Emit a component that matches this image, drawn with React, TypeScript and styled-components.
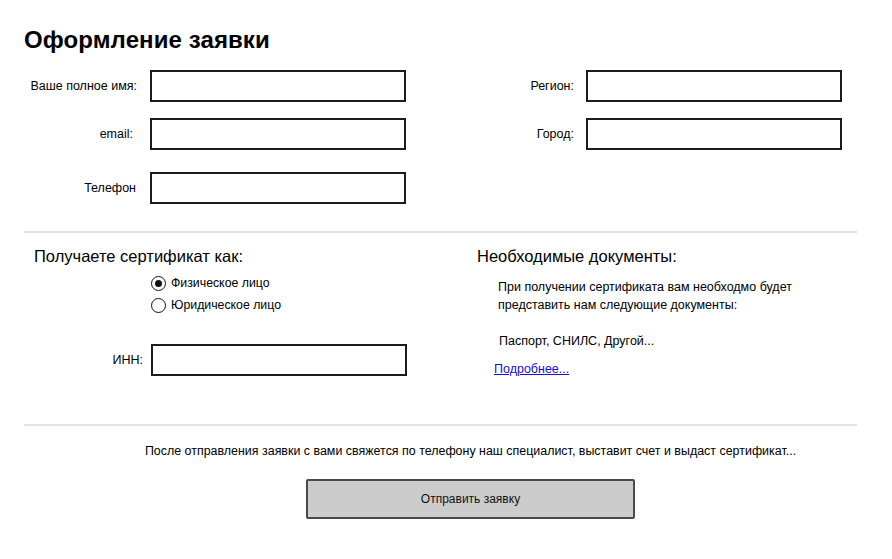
import React from 'react';
import styled, { createGlobalStyle } from 'styled-components';

const GlobalStyle = createGlobalStyle`
  html, body { margin: 0; padding: 0; background: #ffffff; }
  body {
    font-family: "Liberation Sans", Arial, sans-serif;
    color: #000;
    font-size: 12px;
  }
`;

const Page = styled.div`
  width: 892px;
  height: 559px;
  box-sizing: border-box;
  padding: 28px 35px 0 24px;
  overflow: hidden;
`;

const Title = styled.h1`
  margin: 0;
  font-size: 24px;
  line-height: 23px;
  font-weight: bold;
  letter-spacing: 0.1px;
`;

const TopGrid = styled.div`
  display: grid;
  grid-template-columns: 382px 381px;
  column-gap: 55px;
  margin-top: 19px;
  align-items: start;
`;

const Column = styled.div<{ $pad?: number }>`
  display: flex;
  flex-direction: column;
  padding-left: ${p => p.$pad ?? 0}px;
`;

const FieldRow = styled.div<{ $top?: number }>`
  display: flex;
  align-items: center;
  height: 32px;
  margin-top: ${p => p.$top ?? 0}px;
`;

const Label = styled.label<{ $width: number; $gap: number }>`
  width: ${p => p.$width}px;
  margin-right: ${p => p.$gap}px;
  text-align: right;
  font-size: 12.5px;
  white-space: nowrap;
  flex-shrink: 0;
`;

const TextBox = styled.input`
  width: 256px;
  height: 32px;
  box-sizing: border-box;
  border: 2px solid #1c1c1c;
  border-radius: 0;
  background: #fff;
  padding: 0 6px;
  font: inherit;
  outline: none;
`;

const Divider = styled.hr<{ $top: number }>`
  margin: ${p => p.$top}px 0 0 0;
  height: 2px;
  border: none;
  background: #e2e2e2;
`;

const MiddleGrid = styled.div`
  display: grid;
  grid-template-columns: 422px 1fr;
  align-items: start;
  margin-top: 13px;
`;

const SectionHeading = styled.h2<{ $indent: number }>`
  margin: 0 0 0 ${p => p.$indent}px;
  font-size: 16.5px;
  line-height: 20px;
  font-weight: normal;
`;

const RadioGroup = styled.div`
  display: flex;
  flex-direction: column;
  margin: 6px 0 0 127px;
`;

const RadioRow = styled.label`
  display: flex;
  align-items: center;
  height: 22px;
  font-size: 12.3px;
  gap: 5px;
`;

const RadioCircle = styled.span<{ $checked?: boolean }>`
  width: 15px;
  height: 15px;
  box-sizing: border-box;
  border: 1.5px solid #111;
  border-radius: 50%;
  display: inline-flex;
  align-items: center;
  justify-content: center;
  background: #fff;
  &::after {
    content: '';
    width: 7px;
    height: 7px;
    border-radius: 50%;
    background: #111;
    display: ${p => (p.$checked ? 'block' : 'none')};
  }
`;

const Paragraph = styled.p<{ $top: number; $indent: number }>`
  margin: ${p => p.$top}px 0 0 ${p => p.$indent}px;
  font-size: 12.5px;
  line-height: 18px;
`;

const MoreLink = styled.a`
  display: block;
  margin: 11px 0 0 48px;
  font-size: 12.5px;
  line-height: 16px;
  color: #1a0dcc;
  text-decoration: underline;
`;

const Footer = styled.div`
  display: flex;
  flex-direction: column;
  align-items: center;
  padding-left: 60px;
`;

const Note = styled.p`
  margin: 17px 0 0 0;
  font-size: 12.45px;
  line-height: 16px;
  white-space: nowrap;
`;

const SubmitButton = styled.button`
  margin-top: 20px;
  width: 329px;
  height: 40px;
  box-sizing: border-box;
  background: #cccccc;
  border: 2px solid #4a4a4a;
  border-radius: 2px;
  font-family: inherit;
  font-size: 12px;
  color: #111;
  cursor: pointer;
`;

export default function App() {
  return (
    <>
      <GlobalStyle />
      <Page>
        <Title>Оформление заявки</Title>
        <TopGrid>
          <Column>
            <FieldRow>
              <Label $width={113} $gap={13}>Ваше полное имя:</Label>
              <TextBox />
            </FieldRow>
            <FieldRow $top={16}>
              <Label $width={109} $gap={17}>email:</Label>
              <TextBox />
            </FieldRow>
            <FieldRow $top={22}>
              <Label $width={112} $gap={14}>Телефон</Label>
              <TextBox />
            </FieldRow>
          </Column>
          <Column>
            <FieldRow>
              <Label $width={113} $gap={12}>Регион:</Label>
              <TextBox />
            </FieldRow>
            <FieldRow $top={16}>
              <Label $width={113} $gap={12}>Город:</Label>
              <TextBox />
            </FieldRow>
          </Column>
        </TopGrid>

        <Divider $top={27} />

        <MiddleGrid>
          <Column>
            <SectionHeading $indent={10}>Получаете сертификат как:</SectionHeading>
            <RadioGroup>
              <RadioRow>
                <RadioCircle $checked />
                Физическое лицо
              </RadioRow>
              <RadioRow>
                <RadioCircle />
                Юридическое лицо
              </RadioRow>
            </RadioGroup>
            <FieldRow $top={28}>
              <Label $width={119} $gap={8}>ИНН:</Label>
              <TextBox />
            </FieldRow>
          </Column>
          <Column>
            <SectionHeading $indent={31}>Необходимые документы:</SectionHeading>
            <Paragraph $top={12} $indent={52}>
              При получении сертификата вам необходмо будет
              <br />
              представить нам следующие документы:
            </Paragraph>
            <Paragraph $top={18} $indent={53}>
              Паспорт, СНИЛС, Другой...
            </Paragraph>
            <MoreLink href="#">Подробнее...</MoreLink>
          </Column>
        </MiddleGrid>

        <Divider $top={47} />

        <Footer>
          <Note>
            После отправления заявки с вами свяжется по телефону наш специалист, выставит счет и выдаст сертификат...
          </Note>
          <SubmitButton type="button">Отправить заявку</SubmitButton>
        </Footer>
      </Page>
    </>
  );
}
